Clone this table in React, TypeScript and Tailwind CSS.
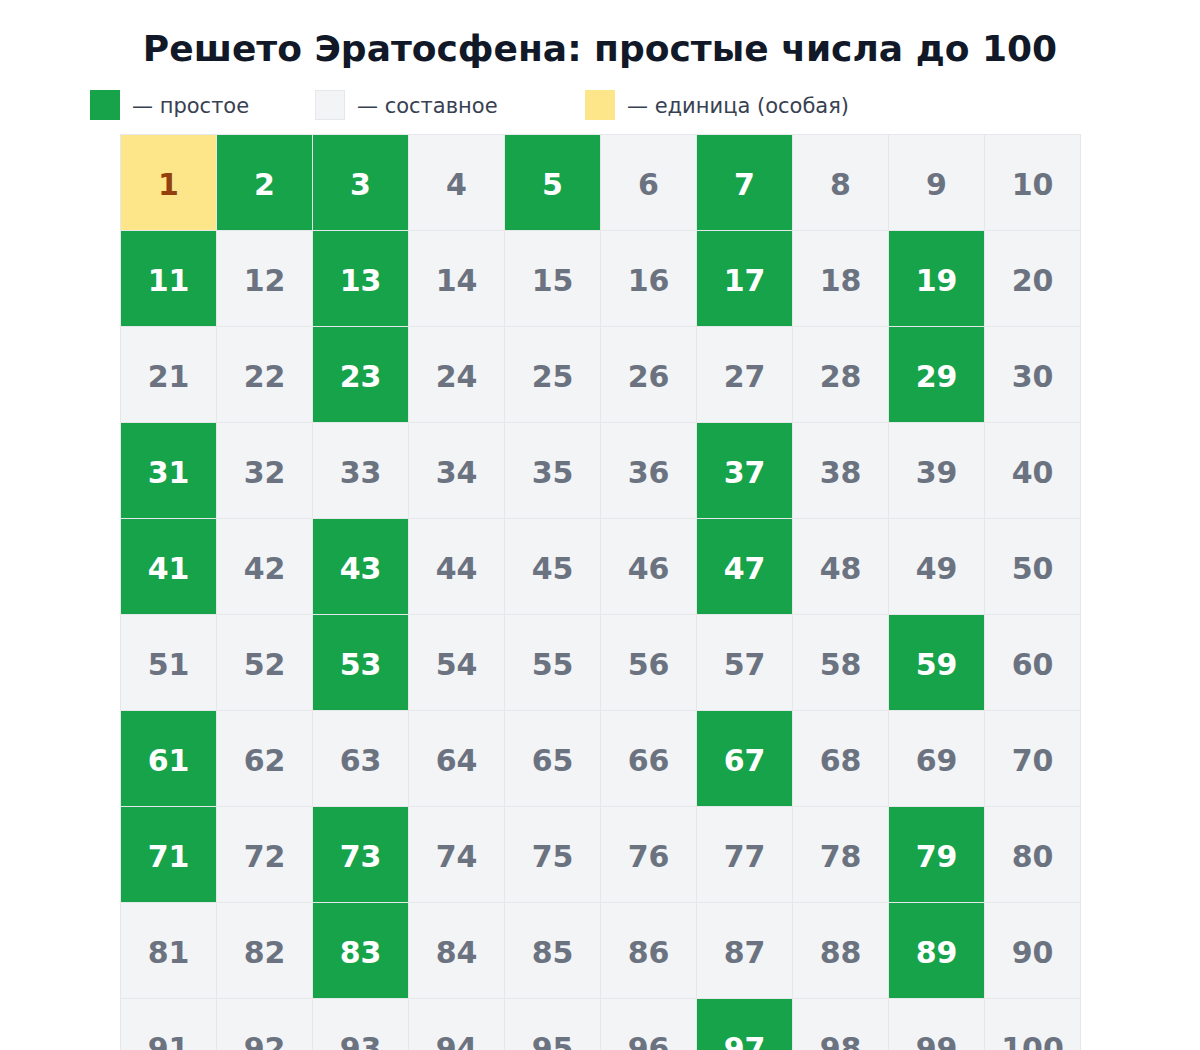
const nums = Array.from({ length: 100 }, (_, i) => i + 1)

function isPrime(n: number) {
  if (n < 2) return false
  for (let d = 2; d * d <= n; d++) if (n % d === 0) return false
  return true
}

function cellClass(n: number) {
  if (n === 1) return 'bg-[#fde68a] text-[#92400e]'
  if (isPrime(n)) return 'bg-[#16a34a] text-white'
  return 'bg-[#f3f4f6] text-[#6b7280]'
}

export default function App() {
  return (
    <div className="min-h-screen bg-white font-['DejaVu_Sans',sans-serif]">
      {/* Title */}
      <h1 className="pt-[27px] text-center text-[36px] font-bold leading-[44px] text-[#111827]">
        Решето Эратосфена: простые числа до 100
      </h1>

      {/* Legend */}
      <div className="mt-[19px] flex h-[30px] items-center pl-[90px] text-[21px] leading-[30px] text-[#374151]">
        <div className="flex w-[225px] items-center gap-3">
          <span className="h-[30px] w-[30px] bg-[#16a34a]" />
          <span className="pt-[2px]">— простое</span>
        </div>
        <div className="flex w-[270px] items-center gap-3">
          <span className="h-[30px] w-[30px] border border-[#e5e7eb] bg-[#f3f4f6]" />
          <span className="pt-[2px]">— составное</span>
        </div>
        <div className="flex items-center gap-3">
          <span className="h-[30px] w-[30px] bg-[#fde68a]" />
          <span className="pt-[2px]">— единица (особая)</span>
        </div>
      </div>

      {/* Grid */}
      <div className="ml-[120px] mt-[14px] grid w-[961px] grid-cols-10 gap-px border border-[#e5e7eb] bg-[#e5e7eb]">
        {nums.map((n) => (
          <div
            key={n}
            className={`flex h-[95px] items-center justify-center pt-[3px] text-[30px] font-bold ${cellClass(n)}`}
          >
            {n}
          </div>
        ))}
      </div>
    </div>
  )
}
